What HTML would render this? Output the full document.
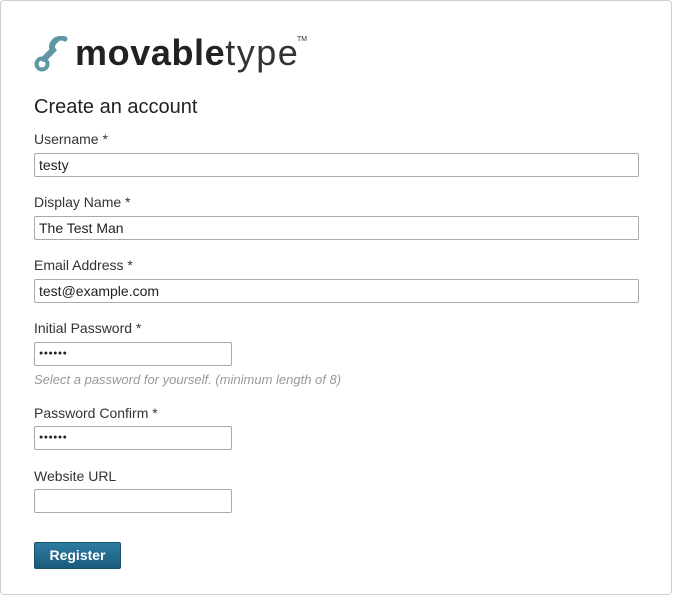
<!DOCTYPE html>
<html><head><style>
body{margin:0;background:#fff;font-family:"Liberation Sans",Arial,sans-serif;color:#222;}
.box{position:absolute;left:0;top:0;width:670px;height:593px;border:1px solid #cfcfcf;border-radius:4px;}
.a{position:absolute;}
.lbl{position:absolute;left:34px;font-size:14px;color:#333;}
.in{position:absolute;left:34px;height:22px;border:1px solid #aaa;border-radius:2px;font-size:14px;line-height:22px;padding-left:4px;box-sizing:content-box;color:#222;}
.w{width:599px}.s{width:192px}
.dots{font-size:7px;letter-spacing:0.5px;font-weight:bold}
</style></head><body>
<div class="box"></div>
<svg class="a" style="left:34px;top:36px" width="36" height="36" viewBox="0 0 36 36">
<path d="M22 4 C18 7 17 11 19 14 L10 23" stroke="#5f96a3" stroke-width="6" fill="none" stroke-linecap="round"/>
<path d="M21 5 C24 2 28 1 31 3" stroke="#5f96a3" stroke-width="5" fill="none" stroke-linecap="round"/>
<circle cx="8" cy="28" r="5.5" stroke="#5f96a3" stroke-width="4" fill="none"/>
</svg>
<div class="a" style="left:75px;top:35px;font-size:36px;line-height:36px;letter-spacing:0.6px;color:#222"><b>movable</b><span style="font-weight:normal;color:#333;letter-spacing:1.5px">type</span></div>
<div class="a" style="left:297px;top:36px;font-size:7px;color:#333">TM</div>
<div class="a" style="left:34px;top:96px;font-size:20px;color:#222">Create an account</div>
<div class="lbl" style="top:131px">Username *</div>
<div class="in w" style="top:153px">testy</div>
<div class="lbl" style="top:194px">Display Name *</div>
<div class="in w" style="top:216px">The Test Man</div>
<div class="lbl" style="top:257px">Email Address *</div>
<div class="in w" style="top:279px">test@example.com</div>
<div class="lbl" style="top:320px">Initial Password *</div>
<div class="in s dots" style="top:342px">●●●●●●</div>
<div class="a" style="left:34px;top:372px;font-size:13px;font-style:italic;color:#999">Select a password for yourself. (minimum length of 8)</div>
<div class="lbl" style="top:405px">Password Confirm *</div>
<div class="in s dots" style="top:426px">●●●●●●</div>
<div class="lbl" style="top:468px">Website URL</div>
<div class="in s" style="top:489px"></div>
<div class="a" style="left:34px;top:542px;width:85px;height:25px;border:1px solid #1a4f68;border-radius:2px;background:linear-gradient(#2e7ca0,#1a5b7c);color:#fff;font-weight:bold;font-size:14px;text-align:center;line-height:25px">Register</div>
</body></html>
